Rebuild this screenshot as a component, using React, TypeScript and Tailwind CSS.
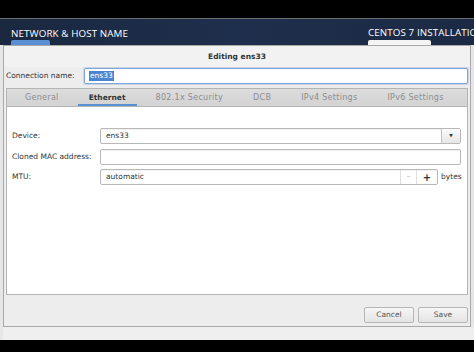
import React from "react";

const tabs = ["General", "Ethernet", "802.1x Security", "DCB", "IPv4 Settings", "IPv6 Settings"];

function Field({ value, children }: { value?: string; children?: React.ReactNode }) {
  return (
    <div className="flex h-[16px] flex-1 items-stretch rounded-[2px] border border-[#b8b8b8] bg-white shadow-[inset_0_1px_1px_rgba(0,0,0,0.06)]">
      <div className="flex flex-1 items-center pl-[5px] text-[#2e3436]">{value}</div>
      {children}
    </div>
  );
}

function Row({ label, children }: { label: string; children: React.ReactNode }) {
  return (
    <div className="flex h-[16px] items-center">
      <div className="w-[88px] shrink-0 text-[#2e3436]">{label}</div>
      {children}
    </div>
  );
}

export default function App() {
  return (
    <div className="flex h-[357px] w-[474px] flex-col overflow-hidden bg-white font-['DejaVu_Sans',sans-serif] text-[7.5px]">
      <div className="h-[18px] shrink-0 bg-black" />
      <div className="h-[1px] shrink-0 bg-[#6e6e6e]" />

      {/* anaconda header behind the dialog */}
      <div className="flex h-[26px] shrink-0 overflow-hidden bg-gradient-to-r from-[#1a2840] via-[#1e2f4d] to-[#1b2a44]">
        <div className="w-[368px] shrink-0 pl-[11px] pt-[10px]">
          <div className="font-['Open_Sans',sans-serif] text-[9.8px] leading-[10px] tracking-[0.1px] text-white">NETWORK &amp; HOST NAME</div>
          <div className="mt-[1px] h-[8px] w-[39px] rounded-[2px] bg-[#5b8fd3]" />
        </div>
        <div className="shrink-0 whitespace-nowrap pt-[9px]">
          <div className="font-['Open_Sans',sans-serif] text-[9.8px] leading-[10px] tracking-[0.1px] text-white">CENTOS 7 INSTALLATION</div>
          <div className="mt-[2px] h-[8px] w-[63px] rounded-[2px] bg-[#f4f4f4]" />
        </div>
      </div>

      <div className="flex h-[295px] shrink-0 flex-col bg-[#e6e6e6] pl-[3px]">
        {/* dialog */}
        <div className="flex h-[282px] w-[468px] flex-col border border-[#a9a9a9] bg-[#ededed]">
          <div className="flex h-[21px] items-center justify-center bg-[#f2f2f2] pt-[1px] font-bold text-[#2e3436]">Editing ens33</div>
          <div className="mt-[1px] flex h-[16px] items-center pl-[2px] pr-[2px]">
            <div className="w-[78px] shrink-0 text-[#2e3436]">Connection name:</div>
            <div className="flex h-[16px] flex-1 items-center rounded-[2px] border border-[#7ea6d8] bg-white pl-[4px] shadow-[0_0_0_1px_rgba(126,166,216,0.35)]">
              <span className="bg-[#4a86cf] px-[1px] leading-[10px] text-white">ens33</span>
            </div>
          </div>

          {/* notebook */}
          <div className="mx-[2px] mt-[4px] flex h-[207px] flex-col border border-[#b4b4b4] bg-white">
            <div className="flex h-[18px] shrink-0 items-stretch border-b border-[#b4b4b4] bg-gradient-to-b from-[#dcdcdc] to-[#d3d3d3] pl-[3px]">
              {tabs.map((t) => {
                const active = t === "Ethernet";
                return (
                  <div key={t} className="flex flex-col">
                    <div
                      className={
                        active
                          ? "flex flex-1 items-center px-[15px] pt-[2px] font-bold text-[#2e3436]"
                          : "flex flex-1 items-center px-[15px] pt-[2px] text-[8px] tracking-[0.3px] text-[#8b8e8f]"
                      }
                    >
                      {t}
                    </div>
                    <div className={active ? "mx-[4px] h-[2px] bg-[#5b8fd3]" : "h-[2px]"} />
                  </div>
                );
              })}
            </div>

            <div className="flex flex-col gap-[4.5px] pl-[5px] pr-[6px] pt-[21px]">
              <Row label="Device:">
                <Field value="ens33">
                  <div className="flex w-[19px] items-center justify-center border-l border-[#c4c4c4] bg-gradient-to-b from-[#fbfbfb] to-[#e6e6e6] text-[4.5px] text-[#2e3436]">▼</div>
                </Field>
              </Row>
              <Row label="Cloned MAC address:">
                <Field />
              </Row>
              <Row label="MTU:">
                <div className="flex flex-1 items-center">
                  <Field value="automatic">
                    <div className="flex w-[16px] items-center justify-center border-l border-[#dedede] text-[8px] text-[#c4c4c4]">–</div>
                    <div className="flex w-[21px] items-center justify-center border-l border-[#dedede] text-[10px] font-bold text-[#2e3436]">+</div>
                  </Field>
                  <div className="w-[23px] shrink-0 pl-[3px] text-[#2e3436]">bytes</div>
                </div>
              </Row>
            </div>
          </div>

          <div className="flex flex-1 items-end justify-end gap-[4px] pb-[3px] pr-[2px]">
            <div className="flex h-[16px] w-[50px] items-center justify-center rounded-[2px] border border-[#b6b6b6] bg-gradient-to-b from-[#f6f6f6] to-[#e4e4e4] text-[#555]">Cancel</div>
            <div className="flex h-[16px] w-[50px] items-center justify-center rounded-[2px] border border-[#b6b6b6] bg-gradient-to-b from-[#f6f6f6] to-[#e4e4e4] text-[#555]">Save</div>
          </div>
        </div>
        <div className="flex-1 bg-[#efefef]" />
      </div>

      <div className="h-[12px] shrink-0 bg-black" />
      <div className="flex-1 bg-white" />
    </div>
  );
}
